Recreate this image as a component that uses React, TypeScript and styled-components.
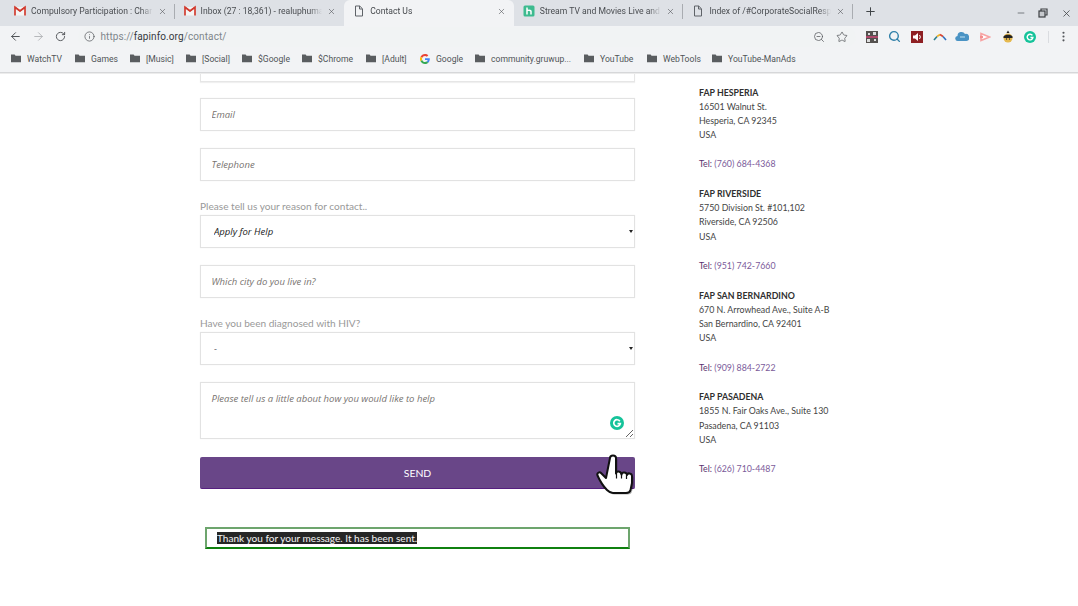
import React from 'react';
import styled, { createGlobalStyle } from 'styled-components';
import { ArrowLeft, ArrowRight, RotateCw, Info, Star, ZoomOut, X, Plus, Minus, MoreVertical, Search } from 'lucide-react';

const Global = createGlobalStyle`
  html, body { margin: 0; padding: 0; background: #fff; overflow: hidden; }
  #root { width: 1078px; height: 606px; overflow: hidden; }
`;
const Page = styled.div`
  width: 1078px; height: 606px; display: flex; flex-direction: column; overflow: hidden;
  font-family: Lato, "Liberation Sans", sans-serif; background: #fff;
`;
const TabStrip = styled.div`
  height: 26px; background: #dee1e6; display: flex; align-items: stretch; padding-left: 5px; flex: none;
`;
const TabItem = styled.div<{ $active?: boolean; $sep?: boolean }>`
  width: 169.6px; flex: none; box-sizing: border-box; display: flex; align-items: center; gap: 5px; padding: 0 8px 4px 9px;
  font: 8.6px Roboto, "Liberation Sans", sans-serif; position: relative;
  background: ${p => (p.$active ? '#f2f3f5' : 'transparent')};
  border-radius: ${p => (p.$active ? '6px 6px 0 0' : '0')};
  color: ${p => (p.$active ? '#45484c' : '#4a4d51')};
  &::after {
    content: ''; position: absolute; right: 0; top: 4px; bottom: 7px; width: 1px;
    background: ${p => (p.$sep ? '#a9acb1' : 'transparent')};
  }
`;
const TabTitle = styled.span`
  flex: 1; min-width: 0; white-space: nowrap; overflow: hidden;
  -webkit-mask-image: linear-gradient(90deg, #000 90%, transparent 100%);
  mask-image: linear-gradient(90deg, #000 90%, transparent 100%);
`;
const TabIcon = styled.span`
  width: 12px; height: 12px; flex: none; display: flex; align-items: center; justify-content: center;
`;
const NewTab = styled.div`
  width: 36px; padding-bottom: 4px; box-sizing: border-box; display: flex; align-items: center; justify-content: center; color: #3c4043;
`;
const WindowButtons = styled.div`
  margin-left: auto; display: flex; align-items: center; gap: 12.5px; padding-right: 6.5px; color: #3c4043;
`;
const Toolbar = styled.div`
  height: 21px; background: #f2f3f5; display: flex; align-items: center; flex: none; padding-left: 8px;
`;
const NavButton = styled.span<{ $dim?: boolean }>`
  width: 15px; height: 15px; margin-right: 7.5px; display: flex; align-items: center; justify-content: center;
  color: ${p => (p.$dim ? '#b4b6b9' : '#4d5054')};
`;
const Omnibox = styled.div`
  margin-left: 2px; width: 778px; height: 20px; border-radius: 10px; background: #f1f3f4; display: flex; align-items: center;
  padding: 0 8px 0 6px; box-sizing: border-box; font: 10px Roboto, "Liberation Sans", sans-serif; color: #80868b; letter-spacing: .1px; flex: none;
`;
const Url = styled.span`
  flex: 1; margin-left: 6px;
  b { font-weight: 400; color: #36393d; }
`;
const OmniIcons = styled.div`
  display: flex; align-items: center; gap: 11px; color: #55585c;
`;
const Extensions = styled.div`
  display: flex; align-items: center; margin-left: 8.5px; gap: 7.7px;
`;
const ExtIcon = styled.span`
  width: 15px; height: 15px; display: flex; align-items: center; justify-content: center; flex: none;
`;
const ToolbarRule = styled.span`
  width: 1px; height: 12px; background: #dadce0; margin-left: 2px;
`;
const Bookmarks = styled.div`
  height: 26px; padding: 0 0 2px 11px; background: #f2f3f5; border-bottom: 1px solid #d6d7d9; box-shadow: 0 1px 0 #ececec; display: flex; align-items: center;
  font: 8.6px Roboto, "Liberation Sans", sans-serif; color: #505357; flex: none; box-sizing: border-box; z-index: 1;
`;
const Bookmark = styled.span<{ $w: number }>`
  display: flex; align-items: center; gap: 6px; width: ${p => p.$w}px; flex: none; white-space: nowrap;
`;
const Main = styled.main`
  flex: 1; display: flex; min-height: 0; padding-left: 200px; overflow: hidden;
`;
const FormCol = styled.div`
  width: 435px; flex: none; display: flex; flex-direction: column;
`;
const CutField = styled.div`
  height: 9px; flex: none; box-sizing: border-box; border: 1px solid #e6e6e6; border-top: none; box-shadow: 0 1px 1px #f0f0f0;
`;
const fieldCss = `
  box-sizing: border-box; width: 100%; display: block; border: 1px solid #e2e2e2; background: #fff; outline: none;
  box-shadow: 0 0 1px #eee; font: italic 9.5px "Open Sans", "Liberation Sans", sans-serif; padding: 0 10.5px; margin: 0; color: #555;
  &::placeholder { color: #77736f; opacity: 1; }
`;
const TextInput = styled.input<{ $h?: number; $top?: number }>`
  ${fieldCss}
  flex: none;
  height: ${p => p.$h ?? 33}px; margin-top: ${p => p.$top ?? 17}px;
`;
const FieldLabel = styled.div`
  margin-top: 18.5px; font-size: 10.1px; line-height: 13px; color: #999; height: 13px; flex: none;
`;
const SelectWrap = styled.div`
  position: relative; margin-top: 2.5px; flex: none;
  &::after {
    content: ''; position: absolute; right: 2px; top: 15px; border: 2px solid transparent; border-top: 3px solid #222; border-bottom: 0;
  }
`;
const SelectBox = styled.select`
  ${fieldCss}
  height: 33px; appearance: none; -webkit-appearance: none; color: #222; padding-left: 13px; border-radius: 0;
`;
const AreaWrap = styled.div`
  position: relative; margin-top: 17px; height: 57px; flex: none;
`;
const TextArea = styled.textarea`
  ${fieldCss}
  height: 57px; padding-top: 9px; line-height: 13px; resize: vertical;
`;
const GrammarlyBadge = styled.span`
  position: absolute; right: 11px; top: 32px; width: 14px; height: 14px;
`;
const SendButton = styled.button`
  margin-top: 18px; height: 32px; width: 100%; background: #694688; color: #fff; border: none; border-bottom: 1px solid #561f80; border-radius: 2px;
  font: 10.4px Lato, "Liberation Sans", sans-serif; padding: 0; position: relative; flex: none;
`;
const HandCursor = styled.svg`
  position: absolute; right: 0; top: -2px; width: 39px; height: 40px; overflow: visible;
`;
const Message = styled.div`
  margin: 38px 5px 0; height: 22px; flex: none; box-sizing: border-box; border: 2px solid #398f39; border-color: #6da56d #6da56d #0f800f #6da56d;
  padding-left: 10px; display: flex; align-items: center; font-size: 10.05px; color: #fff;
  span { background: #262626; line-height: 12px; color: #f4f4f4; }
`;
const AddressCol = styled.aside`
  margin-left: 64px; padding-top: 12.6px; font-size: 8.8px; line-height: 14.15px; color: #444;
`;
const Office = styled.section`
  margin-bottom: 15.6px;
  h4 { margin: 0; font-size: 8.8px; font-weight: 700; color: #2f2f2f; text-transform: uppercase; line-height: 14.15px; }
  p { margin: 0; }
`;
const Tel = styled.p`
  && { margin-top: 15.2px; color: #694688; }
  b { font-weight: 400; color: #59336f; }
  span { color: #7b5b9a; }
`;

const HAND = 'M10 23 5 18C3.500 16.500.5 18 1.500 20.500 3.500 25 8 32 11 35c2 2 3 3 6 3h13c3 0 4-1 4.500-3 1.500-5 2-9 1.500-14-.2-3-4.500-3.500-5-1-.3-3-5-3.500-5.500-.5-.5-3.500-5-4-5.500-1V3c0-3.500-6-3.500-6 0z';

const Gmail = () => (
  <svg viewBox="0 0 12 12" width="12" height="12">
    <path d="M1 2h10v8.500H1z" fill="#f4f4f4" />
    <path d="M1 10.500V2.200L6 6l5-3.800v8.300" fill="none" stroke="#d23c30" strokeWidth="1.700" />
    <path d="M1 2.200 6 6l5-3.800" fill="none" stroke="#d23c30" strokeWidth="1.300" />
  </svg>
);
const PageIcon = () => (
  <svg viewBox="0 0 12 12" width="12" height="12" fill="none" stroke="#5f6368" strokeWidth="1">
    <path d="M2.500 1h4.200L9.500 3.800V11h-7z" />
    <path d="M6.500 1v3h3" />
  </svg>
);
const Hulu = () => (
  <svg viewBox="0 0 12 12" width="12" height="12">
    <rect x=".5" y=".5" width="11" height="11" rx="1.500" fill="#3dbb8f" />
    <path d="M4 2.500v7M4 6c0-1 4-1.500 4 .5v3" fill="none" stroke="#fff" strokeWidth="1.500" />
  </svg>
);
const Folder = () => (
  <svg viewBox="0 0 11 9" width="10" height="8.500"><path d="M0 .5h4l1 1.200h6V9H0z" fill="#5a5d60" /></svg>
);
const GoogleG = () => (
  <svg viewBox="0 0 48 48" width="10" height="10">
    <path fill="#EA4335" d="M24 9.500c3.500 0 6.700 1.300 9.100 3.500l6.800-6.800C35.800 2.400 30.300 0 24 0 14.600 0 6.500 5.400 2.600 13.200l7.900 6.200C12.400 13.700 17.700 9.500 24 9.500z" />
    <path fill="#4285F4" d="M47 24.500c0-1.600-.1-3.100-.4-4.500H24v9h13c-.6 3-2.300 5.500-4.800 7.200l7.700 6C44.400 38 47 31.800 47 24.500z" />
    <path fill="#FBBC05" d="M10.500 28.600a14.500 14.500 0 0 1 0-9.200l-7.900-6.200a24 24 0 0 0 0 21.600z" />
    <path fill="#34A853" d="M24 48c6.500 0 11.900-2.100 15.900-5.800l-7.700-6c-2.200 1.400-4.900 2.300-8.200 2.300-6.300 0-11.600-4.200-13.500-9.900l-7.900 6.200C6.500 42.600 14.600 48 24 48z" />
  </svg>
);
const GCircle = ({ size = 14, bg = '#15c39a' }: { size?: number; bg?: string }) => (
  <svg viewBox="0 0 14 14" width={size} height={size}>
    <circle cx="7" cy="7" r="7" fill={bg} />
    <path d="M9.800 5.200A3.300 3.300 0 1 0 10.300 7.600H7.500" fill="none" stroke="#fff" strokeWidth="1.700" />
  </svg>
);

const tabs = [
  { t: 'Compulsory Participation : Char', i: <Gmail />, sep: true },
  { t: 'Inbox (27 : 18,361) - realuphuma', i: <Gmail />, sep: false },
  { t: 'Contact Us', i: <PageIcon />, active: true, sep: false },
  { t: 'Stream TV and Movies Live and', i: <Hulu />, sep: true },
  { t: 'Index of /#CorporateSocialResp', i: <PageIcon />, sep: true },
];
const marks = [
  { t: 'WatchTV', w: 64 }, { t: 'Games', w: 55 }, { t: '[Music]', w: 56 }, { t: '[Social]', w: 56 },
  { t: '$Google', w: 60 }, { t: '$Chrome', w: 64 }, { t: '[Adult]', w: 54 }, { t: 'Google', g: true, w: 55 },
  { t: 'community.gruwup...', w: 109 }, { t: 'YouTube', w: 63 }, { t: 'WebTools', w: 65 }, { t: 'YouTube-ManAds', w: 90 },
];
const offices = [
  { n: 'FAP Hesperia', a: ['16501 Walnut St.', 'Hesperia, CA 92345'], tel: '(760) 684-4368' },
  { n: 'FAP Riverside', a: ['5750 Division St. #101,102', 'Riverside, CA 92506'], tel: '(951) 742-7660' },
  { n: 'FAP San Bernardino', a: ['670 N. Arrowhead Ave., Suite A-B', 'San Bernardino, CA 92401'], tel: '(909) 884-2722' },
  { n: 'FAP Pasadena', a: ['1855 N. Fair Oaks Ave., Suite 130', 'Pasadena, CA 91103'], tel: '(626) 710-4487' },
];

export default function App() {
  return (
    <Page>
      <Global />
      <TabStrip>
        {tabs.map(tab => (
          <TabItem key={tab.t} $active={tab.active} $sep={tab.sep}>
            <TabIcon>{tab.i}</TabIcon>
            <TabTitle>{tab.t}</TabTitle>
            <X size={9} strokeWidth={1.6} color="#55585c" />
          </TabItem>
        ))}
        <NewTab><Plus size={13} strokeWidth={1.8} /></NewTab>
        <WindowButtons>
          <Minus size={10} strokeWidth={1.5} />
          <svg viewBox="0 0 10 10" width="10" height="10" fill="none" stroke="#3c4043" strokeWidth="1.200">
            <rect x="1" y="3" width="6" height="6" fill="#3c4043" fillOpacity=".15" /><path d="M3 3V1h6v6H7" />
          </svg>
          <X size={11} strokeWidth={1.7} />
        </WindowButtons>
      </TabStrip>
      <Toolbar>
        <NavButton><ArrowLeft size={13} strokeWidth={1.8} /></NavButton>
        <NavButton $dim><ArrowRight size={13} strokeWidth={1.8} /></NavButton>
        <NavButton><RotateCw size={11} strokeWidth={2} /></NavButton>
        <Omnibox>
          <Info size={11} strokeWidth={1.6} color="#55585c" />
          <Url>https://<b>fapinfo.org</b>/contact/</Url>
          <OmniIcons>
            <ZoomOut size={12} strokeWidth={1.5} />
            <Star size={12} strokeWidth={1.5} />
          </OmniIcons>
        </Omnibox>
        <Extensions>
          <ExtIcon>
            <svg viewBox="0 0 12 12" width="12" height="12">
              <rect width="12" height="12" fill="#55514f" />
              <path d="M2 2h2v2H2zM7 1h3v3H7zM1 8h3v3H1zM8 8h2v2H8z" fill="#ddd" />
              <path d="M0 6h12" stroke="#e0457b" strokeWidth="1.300" />
            </svg>
          </ExtIcon>
          <ExtIcon><Search size={13} strokeWidth={2.6} color="#2f7fa8" /></ExtIcon>
          <ExtIcon>
            <svg viewBox="0 0 12 12" width="12" height="12">
              <rect width="12" height="12" fill="#8e1f23" />
              <path d="M2 4.500h2L7 2v8L4 7.500H2z" fill="#fff" />
              <path d="M8.500 4a3 3 0 0 1 0 4" fill="none" stroke="#fff" />
            </svg>
          </ExtIcon>
          <ExtIcon>
            <svg viewBox="0 0 14 8" width="14" height="8" fill="none" strokeWidth="1.600">
              <path d="M1 7 4 3.500" stroke="#2c7d8c" /><path d="M4 3.500 7 1.500" stroke="#f0b429" /><path d="M7 1.500 10 3.500" stroke="#d9432f" /><path d="M10 3.500 13 7" stroke="#2d6fc0" />
            </svg>
          </ExtIcon>
          <ExtIcon>
            <svg viewBox="0 0 14 11" width="14" height="11">
              <path d="M3 10a2.500 2.500 0 0 1-.5-5A4 4 0 0 1 10 3a3.500 3.500 0 0 1 1.500 7z" fill="#4a93c4" />
              <path d="M5 6h5" stroke="#bfe0f2" strokeWidth="1" />
            </svg>
          </ExtIcon>
          <ExtIcon>
            <svg viewBox="0 0 12 12" width="12" height="12">
              <path d="M2 2.500 10.500 6 2 9.500z" fill="#fff" stroke="#f7a3a3" strokeWidth="1.600" />
              <rect x="1" y="4.800" width="3" height="2.400" fill="#f58d8d" />
            </svg>
          </ExtIcon>
          <ExtIcon>
            <svg viewBox="0 0 12 13" width="12" height="13">
              <path d="M6 .5 7.500 3h-3z" fill="#222" />
              <ellipse cx="6" cy="8" rx="4.500" ry="4.500" fill="#e6b94e" />
              <path d="M1.500 6.500C3 4 9 4 10.500 6.500V8h-9z" fill="#222" />
              <circle cx="4.500" cy="9" r=".7" fill="#222" /><circle cx="7.500" cy="9" r=".7" fill="#222" />
            </svg>
          </ExtIcon>
          <ExtIcon><GCircle size={12} /></ExtIcon>
          <ToolbarRule />
          <ExtIcon><MoreVertical size={13} strokeWidth={2} color="#55585c" /></ExtIcon>
        </Extensions>
      </Toolbar>
      <Bookmarks>
        {marks.map(m => (
          <Bookmark key={m.t} $w={m.w}>
            {m.g ? <GoogleG /> : <Folder />}
            {m.t}
          </Bookmark>
        ))}
      </Bookmarks>
      <Main>
        <FormCol>
          <CutField />
          <TextInput placeholder="Email" $top={16} />
          <TextInput placeholder="Telephone" />
          <FieldLabel>Please tell us your reason for contact..</FieldLabel>
          <SelectWrap>
            <SelectBox defaultValue="help"><option value="help">Apply for Help</option></SelectBox>
          </SelectWrap>
          <TextInput placeholder="Which city do you live in?" />
          <FieldLabel>Have you been diagnosed with HIV?</FieldLabel>
          <SelectWrap>
            <SelectBox defaultValue="-"><option value="-">-</option></SelectBox>
          </SelectWrap>
          <AreaWrap>
            <TextArea placeholder="Please tell us a little about how you would like to help" />
            <GrammarlyBadge><GCircle /></GrammarlyBadge>
          </AreaWrap>
          <SendButton>
            SEND
            <HandCursor viewBox="0 0 39 40">
              <path d={HAND} fill="rgba(0,0,0,.3)" transform="translate(1.500 1.500)" />
              <path d={HAND} fill="#fff" stroke="#111" strokeWidth="2" strokeLinejoin="round" />
              <path d="M20.500 18.500v5M25.500 19.500v4M30.500 20v4" stroke="#111" strokeWidth="1.200" fill="none" />
            </HandCursor>
          </SendButton>
          <Message><span>Thank you for your message. It has been sent.</span></Message>
        </FormCol>
        <AddressCol>
          {offices.map(o => (
            <Office key={o.n}>
              <h4>{o.n}</h4>
              {o.a.map(l => <p key={l}>{l}</p>)}
              <p>USA</p>
              <Tel><b>Tel:</b> <span>{o.tel}</span></Tel>
            </Office>
          ))}
        </AddressCol>
      </Main>
    </Page>
  );
}
